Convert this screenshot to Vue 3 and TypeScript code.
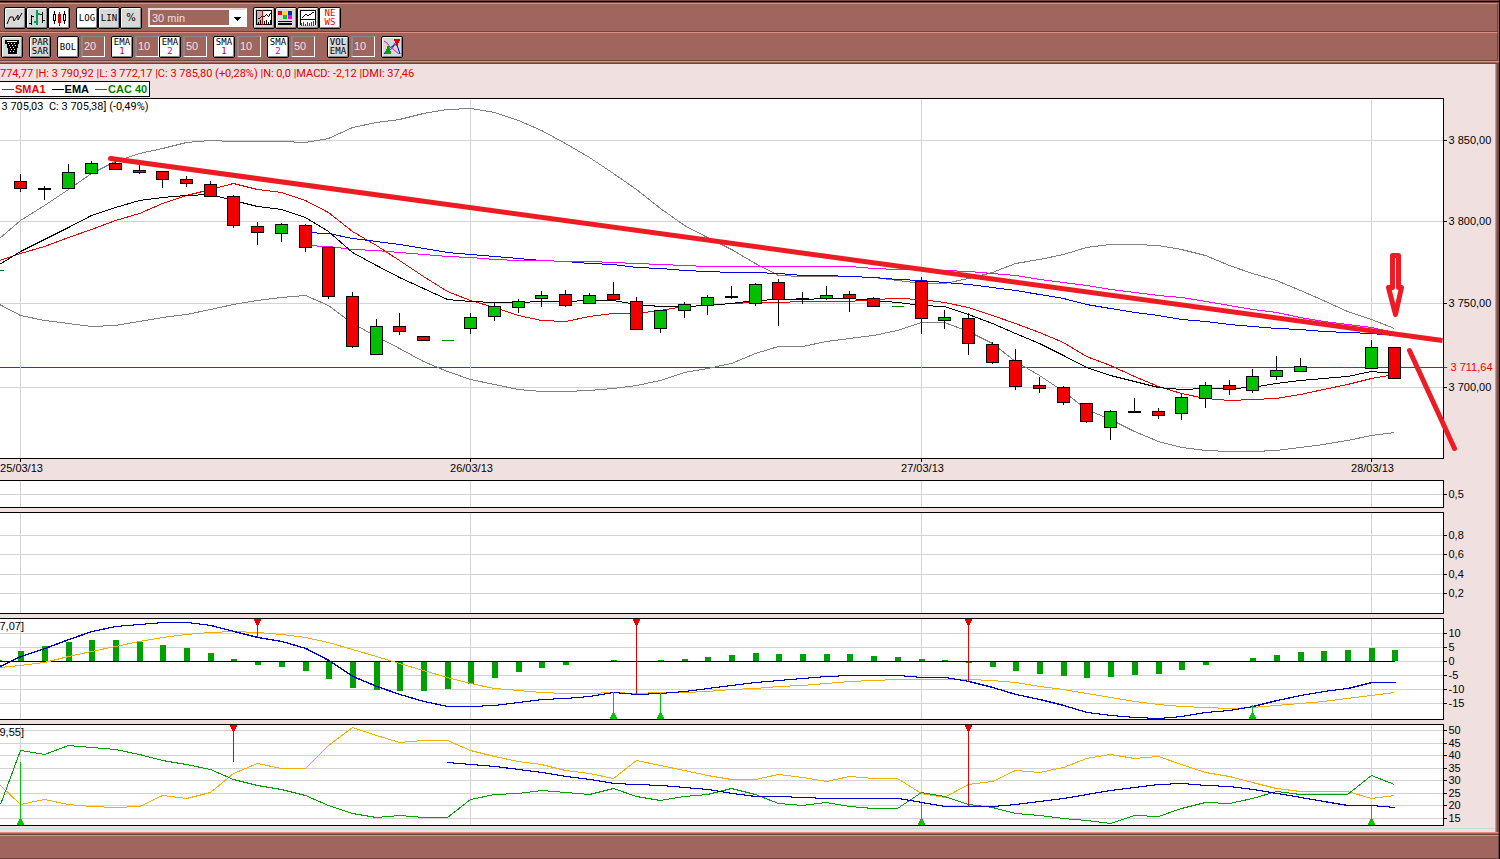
<script setup lang="ts">
import { ref } from 'vue'

type Kind = 'up' | 'down' | 'doji' | 'flat'
type Candle = [slot: number, kind: Kind, top: number, bottom: number, high: number, low: number]
interface Tick { y: number; label: string }
interface Signal { slot: number; y: number }

const PLOT_RIGHT = 1443
const slotX = (slot: number): number => Math.round(20.2 + 23.694 * slot)
const dayX = [0, 19, 38, 57].map(slotX)

function path(values: number[], first = 0, lead?: [number, number]): string {
  const points = values.map((y, n) => `${slotX(first + n)},${y}`)
  if (lead) points.unshift(lead.join(','))
  return points.join(' ')
}

const candles: Candle[] = [
  [0, 'down', 181, 188, 174, 191], [1, 'doji', 188, 189, 186, 199], [2, 'up', 172, 188, 164, 188],
  [3, 'up', 163, 173, 161, 173], [4, 'down', 163, 169, 161, 169], [5, 'down', 170, 172, 165, 173],
  [6, 'down', 171, 179, 171, 187], [7, 'down', 179, 183, 176, 186], [8, 'down', 184, 196, 181, 196],
  [9, 'down', 196, 225, 195, 227], [10, 'down', 226, 232, 222, 244], [11, 'up', 224, 233, 223, 241],
  [12, 'down', 225, 247, 224, 251], [13, 'down', 247, 296, 247, 298], [14, 'down', 296, 346, 292, 347],
  [15, 'up', 326, 354, 319, 354], [16, 'down', 326, 331, 313, 334], [17, 'down', 336, 340, 336, 340],
  [18, 'flat', 340, 340, 340, 340], [19, 'up', 317, 328, 313, 333], [20, 'up', 306, 316, 302, 320],
  [21, 'up', 301, 307, 299, 312], [22, 'up', 295, 298, 291, 306], [23, 'down', 294, 305, 290, 306],
  [24, 'up', 295, 303, 293, 303], [25, 'down', 294, 299, 282, 300], [26, 'down', 301, 329, 297, 329],
  [27, 'up', 310, 328, 310, 332], [28, 'up', 304, 310, 302, 317], [29, 'up', 297, 305, 295, 314],
  [30, 'doji', 296, 297, 286, 298], [31, 'up', 284, 303, 283, 305], [32, 'down', 282, 299, 279, 325],
  [33, 'doji', 298, 299, 292, 303], [34, 'up', 295, 298, 286, 299], [35, 'down', 294, 298, 291, 311],
  [36, 'down', 298, 306, 297, 306], [37, 'flat', 306, 306, 306, 306], [38, 'down', 281, 318, 277, 333],
  [39, 'up', 317, 320, 310, 328], [40, 'down', 318, 343, 313, 354], [41, 'down', 344, 362, 342, 363],
  [42, 'down', 360, 386, 349, 389], [43, 'down', 385, 388, 377, 392], [44, 'down', 387, 402, 386, 404],
  [45, 'down', 403, 421, 403, 422], [46, 'up', 411, 427, 410, 439], [47, 'doji', 411, 412, 398, 412],
  [48, 'down', 411, 415, 408, 418], [49, 'up', 397, 413, 394, 419], [50, 'up', 385, 398, 382, 407],
  [51, 'down', 385, 389, 380, 394], [52, 'up', 376, 390, 369, 392], [53, 'up', 370, 376, 356, 379],
  [54, 'up', 366, 371, 358, 371], [56, 'flat', 367, 367, 367, 367], [57, 'up', 347, 368, 340, 368],
  [58, 'down', 347, 378, 347, 378],
]

const upperBand = path([220, 205, 189, 173, 161, 153, 148, 142, 140, 141, 141, 141, 142, 138, 127, 122, 119, 113, 109, 108, 112, 120, 130, 143, 157, 173, 189, 208, 225, 237, 249, 263, 275, 276, 276, 276, 277, 280, 283, 283, 278, 272, 263, 259, 254, 247, 244, 244, 245, 249, 255, 265, 273, 280, 290, 300, 311, 319, 328], 0, [-1, 238])
const lowerBand = path([315, 320, 323, 326, 325, 321, 317, 314, 309, 304, 300, 297, 295, 305, 323, 336, 348, 361, 371, 379, 384, 389, 391, 391, 390, 388, 385, 380, 372, 368, 363, 353, 346, 346, 341, 338, 335, 330, 322, 322, 331, 343, 361, 375, 391, 409, 419, 431, 441, 447, 450, 451, 451, 450, 447, 444, 440, 435, 432], 0, [-1, 304])
const fastEma = path([251, 239, 227, 215, 207, 200, 197, 195, 194, 200, 206, 209, 217, 231, 252, 265, 277, 288, 299, 301, 302, 302, 301, 301, 300, 300, 304, 306, 306, 305, 303, 300, 299, 299, 298, 298, 300, 302, 305, 306, 314, 323, 333, 343, 355, 367, 375, 381, 387, 389, 388, 388, 387, 383, 380, 378, 376, 371, 373], 0, [-1, 264])
const fastSma = path([253, 246, 237, 229, 220, 213, 203, 195, 189, 183, 189, 192, 200, 212, 231, 245, 260, 276, 291, 300, 307, 315, 320, 321, 316, 313, 313, 310, 306, 305, 303, 302, 302, 301, 301, 301, 299, 298, 299, 302, 307, 315, 323, 332, 342, 356, 365, 376, 386, 393, 398, 400, 399, 398, 394, 389, 384, 378, 374], 0, [-1, 260])
const slowEma = path([232, 233, 238, 241, 244, 248, 252, 254, 256, 258, 260, 261, 263, 264, 267, 268, 270, 271, 272, 272, 273, 275, 275, 276, 277, 279, 280, 282, 284, 287, 290, 294, 298, 304, 308, 312, 315, 319, 321, 324, 326, 328, 329, 331, 332, 333, 335], 12)
const slowSma = path([245, 246, 249, 250, 252, 254, 256, 257, 259, 260, 260, 261, 261, 262, 263, 264, 265, 266, 266, 266, 266, 266, 266, 266, 268, 269, 269, 270, 271, 273, 275, 279, 282, 285, 289, 292, 295, 297, 301, 305, 309, 312, 317, 321, 324, 327, 332], 12)

const macdLine = path([656, 648, 639, 631, 626, 624, 622, 622, 625, 631, 637, 641, 648, 660, 676, 686, 694, 701, 706, 706, 705, 702, 699, 698, 696, 692, 694, 693, 691, 688, 685, 682, 680, 678, 676, 675, 675, 675, 677, 677, 681, 687, 694, 699, 705, 712, 715, 717, 718, 716, 712, 710, 706, 700, 695, 691, 688, 682, 682], 0, [-1, 666])
const macdSignal = path([665, 662, 656, 651, 646, 641, 637, 634, 632, 631, 632, 634, 637, 642, 649, 656, 663, 670, 677, 683, 688, 690, 692, 693, 693, 692, 693, 692, 692, 691, 689, 688, 686, 685, 683, 681, 680, 679, 679, 679, 679, 680, 682, 686, 689, 693, 697, 701, 704, 706, 707, 708, 707, 705, 703, 701, 698, 695, 692], 0, [-1, 667])
const histogram = [651, 646, 642, 640, 640, 642, 645, 648, 653, 659, 665, 667, 671, 679, 688, 690, 691, 691, 689, 684, 678, 672, 668, 665, 661, 660, 661, 660, 659, 657, 655, 653, 654, 654, 654, 654, 656, 657, 659, 660, 663, 667, 671, 674, 676, 678, 677, 675, 674, 670, 665, 661, 658, 655, 652, 651, 650, 648, 650]

const diPlus = path([750, 754, 745, 747, 749, 754, 760, 764, 769, 779, 785, 789, 795, 805, 813, 817, 815, 817, 817, 799, 794, 793, 790, 792, 794, 788, 796, 800, 796, 794, 788, 794, 803, 805, 802, 806, 808, 808, 792, 796, 804, 807, 813, 815, 818, 820, 823, 815, 816, 808, 802, 803, 798, 791, 794, 794, 794, 775, 784], 0, [0, 804])
const diMinus = path([804, 799, 804, 806, 807, 806, 795, 798, 792, 773, 763, 768, 768, 745, 727, 735, 742, 740, 740, 750, 756, 761, 764, 770, 773, 778, 760, 765, 770, 775, 779, 779, 774, 777, 781, 776, 778, 778, 793, 797, 784, 781, 770, 772, 767, 758, 754, 758, 756, 764, 772, 776, 782, 788, 791, 791, 791, 798, 795], 0, [0, 785])
const adx = path([762, 764, 766, 769, 772, 776, 779, 783, 784, 785, 787, 789, 793, 796, 796, 797, 798, 798, 798, 798, 802, 806, 806, 806, 804, 801, 798, 794, 790, 787, 784, 783, 785, 786, 789, 793, 797, 801, 805, 805, 807], 18)

const priceTicks: Tick[] = [{ y: 140, label: '3 850,00' }, { y: 221, label: '3 800,00' }, { y: 303, label: '3 750,00' }, { y: 387, label: '3 700,00' }]
const days = ['25/03/13', '26/03/13', '27/03/13', '28/03/13']
const quote = '3 705,03\u00a0\u00a0C: 3 705,38] (-0,49%)'

interface Panel { id: string; name: string; top: number; bottom: number; next: number; ticks: Tick[]; note: string; sells: Signal[]; buys: Signal[] }
const panels: Panel[] = [
  { id: 'volume', name: 'Volume', top: 480, bottom: 507, next: 512, ticks: [{ y: 494, label: '0,5' }], note: '', sells: [], buys: [] },
  { id: 'ratio', name: 'Ratio', top: 512, bottom: 613, next: 618, ticks: [{ y: 535, label: '0,8' }, { y: 554, label: '0,6' }, { y: 574, label: '0,4' }, { y: 593, label: '0,2' }], note: '', sells: [], buys: [] },
  {
    id: 'macd', name: 'MACD', top: 618, bottom: 719, next: 724, note: '7,07]',
    ticks: [{ y: 633, label: '10' }, { y: 647, label: '5' }, { y: 661, label: '0' }, { y: 675, label: '-5' }, { y: 689, label: '-10' }, { y: 703, label: '-15' }],
    sells: [{ slot: 10, y: 636 }, { slot: 26, y: 693 }, { slot: 40, y: 681 }],
    buys: [{ slot: 25, y: 691 }, { slot: 27, y: 692 }, { slot: 52, y: 704 }],
  },
  {
    id: 'dmi', name: 'DMI', top: 724, bottom: 825, next: 828, note: '9,55]',
    ticks: [{ y: 730, label: '50' }, { y: 743, label: '45' }, { y: 755, label: '40' }, { y: 768, label: '35' }, { y: 780, label: '30' }, { y: 793, label: '25' }, { y: 805, label: '20' }, { y: 818, label: '15' }],
    sells: [{ slot: 9, y: 761 }, { slot: 40, y: 805 }],
    buys: [{ slot: 0, y: 761 }, { slot: 38, y: 801 }, { slot: 57, y: 804 }],
  },
]

const interval = ref('30 min')
const studies = ref([
  { id: 'bol', lines: ['BOL'], tint: '', value: '20', on: true, space: true },
  { id: 'ema1', lines: ['EMA', '1'], tint: 'red', value: '10', on: true, space: true },
  { id: 'ema2', lines: ['EMA', '2'], tint: 'violet', value: '50', on: true, space: false },
  { id: 'sma1', lines: ['SMA', '1'], tint: 'red', value: '10', on: true, space: true },
  { id: 'sma2', lines: ['SMA', '2'], tint: 'violet', value: '50', on: true, space: true },
  { id: 'vol', lines: ['VOL', 'EMA'], tint: '', value: '10', on: false, space: true },
])
</script>

<template>
  <div class="app">
    <header>
      <div class="bar bar-main">
        <div class="group">
          <button type="button" class="tool" aria-label="Line chart">
            <svg viewBox="0 0 20 20"><path d="M2 16L5 9H8L9 13L13 7V12L17 5" fill="none" stroke="#000" /></svg>
          </button>
          <button type="button" class="tool" aria-label="Bar chart">
            <svg viewBox="0 0 20 20" class="crisp">
              <path d="M4 7h1v10h-1zM2 15h2v1h-2zM5 8h2v1h-2zM15 4h1v11h-1zM13 6h2v1h-2zM16 12h2v1h-2z" />
              <path d="M9 2h2v15h-2zM7 13h2v2h-2zM11 5h2v2h-2z" fill="#00a050" />
            </svg>
          </button>
          <button type="button" class="tool on" aria-label="Candlesticks">
            <svg viewBox="0 0 20 20" class="crisp">
              <path d="M5 3h1v13h-1zM15 3h1v13h-1zM4 6h3v7h-3zM14 6h3v7h-3z" />
              <path d="M5 7h1v5h-1zM15 7h1v5h-1z" fill="#fff" />
              <path d="M10 4h1v14h-1zM9 6h3v9h-3z" fill="#e00000" />
            </svg>
          </button>
        </div>
        <div class="group">
          <button type="button" class="tool on word">LOG</button>
          <button type="button" class="tool word">LIN</button>
          <button type="button" class="tool percent">%</button>
        </div>
        <div class="picker">
          <select v-model="interval" aria-label="Interval">
            <option>5 min</option>
            <option>30 min</option>
            <option>60 min</option>
          </select>
          <svg viewBox="0 0 7 4" class="caret crisp"><path d="M0 0h7v1h-1v1h-1v1h-1v1h-1v-1h-1v-1h-1v-1h-1z" /></svg>
        </div>
        <div class="group">
          <button type="button" class="tool" aria-label="Cursor">
            <svg viewBox="0 0 20 20" class="crisp">
              <path d="M2 2h16v15h-16z" fill="#fff" /><path d="M2 2h6v15h-6z" fill="#b8b8b8" />
              <path d="M2 2h16v1h-16zM2 2h1v15h-1zM17 2h1v15h-1zM2 16h16v1h-16z" />
              <path d="M4 14h1v2h-1zM6 12h1v4h-1zM10 13h1v3h-1zM12 12h1v4h-1zM14 14h1v2h-1zM16 12h1v4h-1zM4 10h2v-1h1v-1h1v1h-1v1h-1v1h-2zM9 8h2v1h-2zM11 7h1v1h-1zM12 6h1v1h-1zM13 7h1v1h-1zM14 8h1v1h-1zM15 6h1v2h-1zM16 5h1v1h-1z" />
              <path d="M8 2h1v15h-1z" fill="#e00000" />
            </svg>
          </button>
          <button type="button" class="tool" aria-label="Colours">
            <svg viewBox="0 0 20 20" class="crisp">
              <path d="M2 3h4v4h-4z" fill="#f00000" /><path d="M7 3h4v4h-4z" fill="#ffe000" /><path d="M12 3h4v4h-4z" fill="#0020e0" />
              <path d="M7 7h4v4h-4z" fill="#00d000" /><path d="M12 7h4v4h-4z" fill="#f000f0" />
              <path d="M2 13h14v1h-14zM2 15h14v2h-14z" />
            </svg>
          </button>
          <button type="button" class="tool" aria-label="Indicators">
            <svg viewBox="0 0 20 20" class="crisp">
              <path d="M2 2h16v15h-16z" fill="#fff" /><path d="M2 2h16v1h-16zM2 2h1v15h-1zM17 2h1v15h-1zM2 11h16v1h-16z" />
              <path d="M4 9h1v-1h1v-1h1v-1h2v1h2v1h-2v-1h-2v1h-1v1h-1v1h-1zM11 6h2v1h-2zM13 5h1v1h-1zM14 4h2v1h-2z" />
              <path d="M3 15h1v3h-1zM5 14h1v4h-1zM7 16h1v2h-1zM9 14h1v4h-1zM11 15h1v3h-1zM13 14h1v4h-1zM15 13h1v5h-1z" fill="#e00000" />
            </svg>
          </button>
          <button type="button" class="tool on news"><span>NE</span><span>WS</span></button>
        </div>
      </div>
      <div class="bar bar-studies">
        <button type="button" class="tool" aria-label="Clear">
          <svg viewBox="0 0 20 20" class="crisp">
            <path d="M3 3h14v4h-1v4h-1v6h-9v-6h-1v-4h-2z" />
            <path d="M6 6h1v1h-1zM9 6h1v1h-1zM12 6h1v1h-1zM7 8h1v1h-1zM10 8h1v1h-1zM13 8h1v1h-1zM8 10h1v1h-1zM11 10h1v1h-1zM9 12h1v1h-1zM12 12h1v1h-1zM8 14h1v1h-1zM11 14h1v1h-1zM5 4h10v1h-10z" fill="#fff" />
          </svg>
        </button>
        <button type="button" class="tool stacked"><span>PAR</span><span>SAR</span></button>
        <div v-for="s in studies" :key="s.id" class="study" :class="{ tight: !s.space, far: s.id === 'vol' }">
          <button type="button" class="tool" :class="[s.on ? 'on' : '', s.lines.length > 1 ? 'stacked' : 'word']" @click="s.on = !s.on">
            <span v-for="(line, n) in s.lines" :key="line" :class="n ? s.tint : ''">{{ line }}</span>
          </button>
          <input v-model="s.value" type="text" :aria-label="s.lines.join(' ') + ' period'">
        </div>
        <button type="button" class="tool" aria-label="Signals">
          <svg viewBox="0 0 20 20">
            <path d="M2 17L6 12L11 9L14 5M15 8L18 17" fill="none" stroke="#0000e0" />
            <path d="M2 4L5 6L8 10L11 12L17 17M8 13L16 5" fill="none" stroke="#f000f0" />
            <path d="M12 2h6v2h-1v2h-1v3h-2v-3h-1v-2h-1z" fill="#e00000" class="crisp" />
            <path d="M5 9h2v3h1v2h1v3h-6v-3h1v-2h1z" fill="#00a000" class="crisp" />
          </svg>
        </button>
      </div>
    </header>

    <main class="charts">
      <p class="status">774,77 |H: 3 790,92 |L: 3 772,17 |C: 3 785,80 (+0,28%) |N: 0,0 |MACD: -2,12 |DMI: 37,46</p>
      <ul class="legend">
        <li class="sma">SMA1</li>
        <li class="ema">EMA</li>
        <li class="cac">CAC 40</li>
      </ul>

      <svg class="chart" viewBox="-0.5 97.5 1495 382" role="img" aria-label="CAC 40, 30 min">
        <g class="crisp">
          <rect x="-2" y="98" :width="PLOT_RIGHT + 2" height="360" class="plot" />
          <line v-for="t in priceTicks" :key="t.y" x1="-1" :x2="PLOT_RIGHT - 1" :y1="t.y" :y2="t.y" class="grid" />
          <line x1="-1" :x2="PLOT_RIGHT + 3" y1="367" y2="367" class="last" />
          <line v-for="x in dayX" :key="x" :x1="x" :x2="x" y1="99" y2="457" class="grid" />
          <polyline :points="upperBand" class="band" />
          <polyline :points="lowerBand" class="band" />
          <polyline :points="fastSma" class="red-line" />
          <polyline :points="slowEma" class="blue-line" />
          <polyline :points="slowSma" class="magenta-line" />
          <polyline :points="fastEma" class="black-line" />
          <line x1="-1" x2="3" y1="270" y2="270" class="flat" />
          <g v-for="c in candles" :key="c[0]" :class="c[1]">
            <line v-if="c[1] !== 'flat'" :x1="slotX(c[0])" :x2="slotX(c[0])" :y1="c[4] - 0.5" :y2="c[5] + 0.5" />
            <line v-if="c[1] === 'flat'" :x1="slotX(c[0]) - 6" :x2="slotX(c[0]) + 6" :y1="c[2]" :y2="c[2]" />
            <rect v-else :x="slotX(c[0]) - 6" :y="c[2]" width="12" :height="c[3] - c[2]" />
          </g>
          <path :d="`M-1 458H${PLOT_RIGHT}V98H-1`" class="frame" />
          <line v-for="t in priceTicks" :key="t.label" :x1="PLOT_RIGHT" :x2="PLOT_RIGHT + 3" :y1="t.y" :y2="t.y" class="frame" />
          <line v-for="x in dayX" :key="x" :x1="x" :x2="x" y1="458" y2="461" class="frame" />
        </g>
        <text v-for="t in priceTicks" :key="t.label" x="1448" :y="t.y + 3">{{ t.label }}</text>
        <text x="1450" y="370" class="last-label">3 711,64</text>
        <text v-for="(d, n) in days" :key="d" :x="dayX[n] + 1" y="471" text-anchor="middle">{{ d }}</text>
        <text x="1" y="109" class="note">{{ quote }}</text>
        <g class="marker">
          <path d="M110 158L1442 340" class="trend" />
          <path d="M110 158h1" />
          <path d="M1409 350L1454 448" />
          <path d="M1392 255H1398V287H1401L1395 314L1388 287H1392Z" />
        </g>
      </svg>

      <svg
        v-for="p in panels" :key="p.id" class="chart" role="img" :aria-label="p.name"
        :viewBox="`-0.5 ${p.top - 0.5} 1495 ${p.next - p.top}`"
      >
        <g class="crisp">
          <rect x="-2" :y="p.top" :width="PLOT_RIGHT + 2" :height="p.bottom - p.top" class="plot" />
          <line v-for="t in p.ticks" :key="t.y" x1="-1" :x2="PLOT_RIGHT - 1" :y1="t.y" :y2="t.y" class="grid" />
          <line v-for="x in dayX" :key="x" :x1="x" :x2="x" :y1="p.top" :y2="p.bottom" class="grid" />
          <template v-if="p.id === 'macd'">
            <rect x="-1" y="659" width="2" height="2" class="bar-fill" />
            <rect v-for="(y, n) in histogram" :key="n" :x="slotX(n) - 2.5" :y="Math.min(y, 661) - 0.5" width="6" :height="Math.abs(y - 661)" class="bar-fill" />
            <line x1="-1" x2="1394" y1="661" y2="661" class="frame" />
            <polyline :points="macdSignal" class="orange-line" />
            <polyline :points="macdLine" class="navy-line" />
            <polyline :points="macdLine" class="navy-line" transform="translate(1 0)" />
          </template>
          <template v-if="p.id === 'dmi'">
            <polyline :points="diMinus" class="orange-line" />
            <polyline :points="diPlus" class="green-line" />
          </template>
          <g v-for="s in p.sells" :key="s.slot" class="sell">
            <path :d="`M${slotX(s.slot)} ${p.top + 1}V${s.y}`" />
            <path :d="`M${slotX(s.slot) - 3} ${p.top + 1}h6l-2 5h-2z`" />
          </g>
          <g v-for="b in p.buys" :key="b.slot" class="buy">
            <path :d="`M${slotX(b.slot)} ${p.bottom - 1}V${b.y}`" />
            <path :d="`M${slotX(b.slot) - 3} ${p.bottom - 1}h6l-2 -5h-2z`" />
          </g>
          <template v-if="p.id === 'dmi'">
            <polyline :points="adx" class="navy-line" />
            <polyline :points="adx" class="navy-line" transform="translate(1 0)" />
          </template>
          <path :d="`M-1 ${p.bottom}H${PLOT_RIGHT}V${p.top}H-1`" class="frame" />
          <line v-for="t in p.ticks" :key="t.label" :x1="PLOT_RIGHT" :x2="PLOT_RIGHT + 3" :y1="t.y" :y2="t.y" class="frame" />
        </g>
        <text v-for="t in p.ticks" :key="t.label" x="1448" :y="t.y + 3">{{ t.label }}</text>
        <text x="-1" :y="p.top + 11">{{ p.note }}</text>
      </svg>
    </main>
    <footer />
  </div>
</template>

<style>
body {
  background: #a0655d;
}
</style>

<style scoped>
.app {
  box-sizing: border-box;
  min-height: 100vh;
  display: flex;
  flex-direction: column;
  border-right: 1px solid #000;
  background: #a0655d;
  font-family: "Liberation Sans", Arial, sans-serif;
  font-size: 11px;
  color: #000;
}
header {
  border-top: 1px solid #70433e;
  box-shadow: inset 0 1px #000, inset 0 2px #70433e;
  padding-top: 2px;
}
.bar {
  box-sizing: border-box;
  display: flex;
  align-items: center;
  gap: 6px;
  height: 29px;
  margin-right: 1px;
  border-top: 1px solid #e09080;
  border-bottom: 1px solid #70433e;
  border-right: 1px solid #70433e;
  background: #a0655d;
}
.bar-main {
  padding-left: 4px;
}
.bar-studies {
  padding-left: 1px;
}
.group {
  display: flex;
}
.tool {
  box-sizing: border-box;
  width: 22px;
  height: 22px;
  padding: 0;
  border: 1px solid #000;
  border-radius: 2px;
  background: #d8d8d8;
  box-shadow: inset 1px 1px #fff, inset -1px -1px #888;
  color: #000;
  font-family: "DejaVu Sans Mono", monospace;
  font-size: 9px;
  line-height: 9px;
  display: flex;
  flex-direction: column;
  align-items: center;
  justify-content: center;
  flex: none;
}
.tool.on {
  background: #fff;
}
.tool svg {
  display: block;
  width: 20px;
  height: 20px;
}
.tool.word {
  padding-top: 2px;
}
.tool.percent {
  font-family: "DejaVu Sans", sans-serif;
  font-size: 10px;
}
.tool.news {
  color: #e00000;
}
.red {
  color: #c00000;
}
.violet {
  color: #c000c0;
}
.crisp {
  shape-rendering: crispEdges;
}
.picker {
  position: relative;
  width: 99px;
  height: 19px;
}
.picker select {
  appearance: none;
  box-sizing: border-box;
  display: block;
  width: 100%;
  height: 100%;
  margin: 0;
  padding: 1px 18px 0 2px;
  border: 2px solid #fff;
  border-top-color: #e8d8d8;
  border-left-color: #e8d8d8;
  border-radius: 0;
  background: linear-gradient(to left, #fff 16px, #a0655d 16px);
  color: #f0e0e0;
  font: inherit;
}
.caret {
  position: absolute;
  right: 6px;
  top: 9px;
  width: 7px;
  height: 4px;
  pointer-events: none;
}
.study {
  display: flex;
  align-items: center;
  gap: 2px;
}
.study.tight {
  margin-left: -6px;
}
.study.far {
  margin-left: 6px;
}
.study input {
  box-sizing: border-box;
  width: 24px;
  height: 21px;
  padding: 0 0 2px 1px;
  border: 1px solid #fff;
  border-width: 1px 1px 1px 2px;
  border-top-color: #888;
  border-left-color: #888;
  border-radius: 0;
  background: #a0655d;
  color: #f0e0e0;
  font: inherit;
}
.charts {
  padding: 2px 4px 4px 0;
  border-top: 1px solid #e09080;
  background: linear-gradient(#c8dcdc, #c8dcdc) 0 calc(100% - 3px) / 100% 1px no-repeat #f0e0e0;
  box-shadow: inset 0 1px #a0655d, inset 0 2px #70433e, inset -1px 0 #70433e, inset -2px 0 #804d46, inset -3px 0 #a0655d, inset -4px 0 #e09080;
}
.status {
  margin: 0;
  padding-top: 2px;
  height: 15px;
  line-height: 15px;
  color: #e00000;
  font-family: Roboto, sans-serif;
  white-space: pre;
}
.legend {
  box-sizing: border-box;
  display: flex;
  gap: 6px;
  width: max-content;
  height: 16px;
  margin: 0 0 1px;
  padding: 0 2px;
  border: 1px solid #000;
  border-left: 0;
  background: #fff;
  list-style: none;
  font-weight: bold;
  line-height: 14px;
}
.legend li {
  display: flex;
  align-items: center;
  gap: 1px;
}
.legend li::before {
  content: "";
  width: 12px;
  height: 1px;
  background: currentColor;
}
.sma {
  color: #e80000;
}
.cac {
  color: #008000;
}
.chart {
  display: block;
  width: 100%;
  height: auto;
}
.chart text {
  font-size: 11px;
}
.chart .note {
  font-family: Roboto, sans-serif;
}
.chart .last-label {
  fill: #f00000;
}
.plot {
  fill: #fff;
}
.grid {
  stroke: #d3d3d3;
}
.frame {
  fill: none;
  stroke: #000;
}
.last {
  stroke: #e00000;
}
polyline {
  fill: none;
}
.band {
  stroke: #808080;
}
.red-line {
  stroke: #e80000;
}
.blue-line {
  stroke: #0000f0;
}
.magenta-line {
  stroke: #ff00ff;
}
.black-line {
  stroke: #000;
}
.orange-line {
  stroke: #f0b000;
}
.green-line {
  stroke: #00a000;
}
.navy-line {
  stroke: #0000c8;
}
.up,
.down,
.doji {
  stroke: #000;
}
.up {
  fill: #00c000;
}
.down {
  fill: #f00000;
}
.flat {
  stroke: #008000;
}
.bar-fill {
  fill: #00a000;
}
.sell {
  stroke: #e80000;
  fill: #e80000;
}
.buy {
  stroke: #00c800;
  fill: #00c800;
}
.marker {
  fill: none;
  stroke: #ed1c24;
  stroke-width: 5;
  stroke-linecap: round;
  stroke-linejoin: round;
}
.marker .trend {
  stroke-linecap: butt;
}
footer {
  box-sizing: border-box;
  flex: 1 0 27px;
  border-top: 1px solid #e09080;
  border-bottom: 1px solid #70433e;
  border-right: 1px solid #70433e;
  box-shadow: inset 0 1px #a0655d, inset 0 2px #70433e, inset 0 3px #e09080;
}
</style>
